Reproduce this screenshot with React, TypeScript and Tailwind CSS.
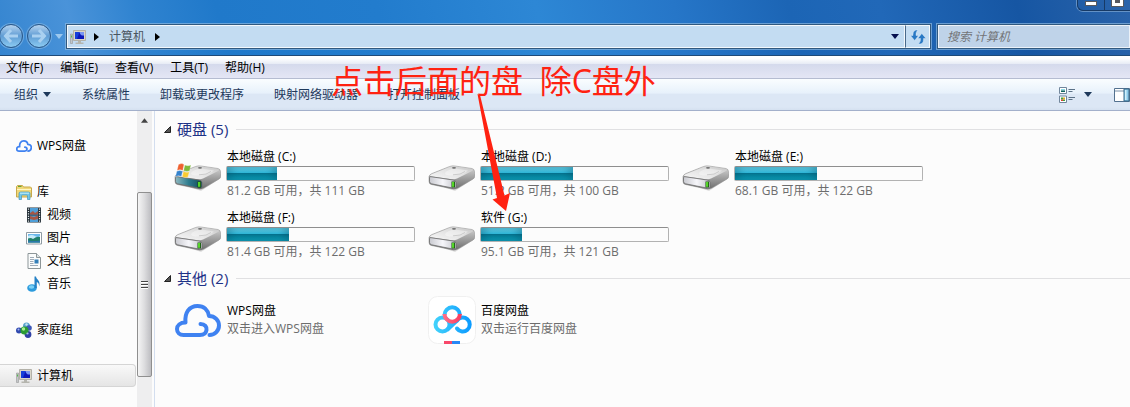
import type { ReactNode } from "react";

type Drive = {
	name: string;
	info: string;
	used: number;
	system?: boolean;
};

const menus = ["文件(F)", "编辑(E)", "查看(V)", "工具(T)", "帮助(H)"];

const commands = ["系统属性", "卸载或更改程序", "映射网络驱动器", "打开控制面板"];

const drives: Drive[] = [
	{ name: "本地磁盘 (C:)", info: "81.2 GB 可用，共 111 GB", used: 27, system: true },
	{ name: "本地磁盘 (D:)", info: "51.2 GB 可用，共 100 GB", used: 49 },
	{ name: "本地磁盘 (E:)", info: "68.1 GB 可用，共 122 GB", used: 44 },
	{ name: "本地磁盘 (F:)", info: "81.4 GB 可用，共 122 GB", used: 33 },
	{ name: "软件 (G:)", info: "95.1 GB 可用，共 121 GB", used: 22 },
];

function Caret({ className }: { className?: string }) {
	return (
		<svg viewBox="0 0 8 5" className={`h-[5px] w-2 ${className ?? ""}`} fill="currentColor" aria-hidden="true">
			<path d="M0 0h8L4 5z" />
		</svg>
	);
}

function RightCaret() {
	return (
		<svg viewBox="0 0 5 8" className="h-2 w-[5px] text-black" fill="currentColor" aria-hidden="true">
			<path d="M0 0v8l5-4z" />
		</svg>
	);
}

function ComputerIcon() {
	return (
		<svg viewBox="0 0 16 16" className="size-4 shrink-0" aria-hidden="true">
			<path d="M0.5 5h2v9.5h-2z" fill="#c3c6c8" stroke="#8a8a8a" strokeWidth=".5" />
			<path d="M1 6.5h1v2H1z" fill="#52b848" />
			<path d="M3.5 1.5h12v10h-12z" fill="#d9d6c9" stroke="#b3b1a8" />
			<path d="M5 3h9v7H5z" fill="#0b17b8" />
			<path d="M5 3h4.5L7 10H5z" fill="#173fda" />
			<path d="M9.5 3H14v3.5C12 7 10 6 9.5 3z" fill="#7996f2" />
			<path d="M8 12h3v1.5h2.5V15h-8v-1.5H8z" fill="#b5b5ae" />
		</svg>
	);
}

function CloudIcon({ className, stroke }: { className: string; stroke: number }) {
	return (
		<svg viewBox="0 0 46 33" className={className} fill="none" stroke="#3f82f1" strokeWidth={stroke} strokeLinecap="round" strokeLinejoin="round" aria-hidden="true">
			<path d="M25.5 20c4.5 0 6.500 3 6 6-.5 3.500-3 5-6.500 5H8.500C4.500 31 2 28.500 2 25c0-3.500 3-6.500 8.500-6.500C9.500 9 14 2 22.500 2c6.500 0 10.500 4 11.500 10 6 0 10 4.500 10 9.500S40 31 34.500 31" />
		</svg>
	);
}

function LibraryIcon() {
	return (
		<svg viewBox="0 0 16 16" className="size-4 shrink-0" aria-hidden="true">
			<path d="M.5 13V2.500L1.500 1.500h5l1 1.500h7l1 1V13z" fill="#f0d878" stroke="#c9a94a" />
			<path d="M2 2.500h3.500" stroke="#60a536" />
			<path d="M1 5.500h14" stroke="#fff6c4" />
			<path d="M3 15.500V9.500q0-1.500 1.500-1.500h8q1.500 0 1.500 1.500v6h-2.500V12q0-1-1-1h-4q-1 0-1 1v3.500z" fill="#73c8e8" stroke="#4496bd" strokeWidth=".7" />
			<path d="M4 9.200h9" stroke="#c4f0fb" />
		</svg>
	);
}

function VideoIcon() {
	return (
		<svg viewBox="0 0 16 16" className="size-4 shrink-0" aria-hidden="true">
			<path d="M1 .5h14v15H1z" fill="#27323a" />
			<path d="M4 1h8v6.500H4zM4 8.500h8V15H4z" fill="#4f9fd8" />
			<path d="M4 6l3-2 2 2 3-2v3.500H4zM4 9l4 1 4-1.500V12l-4 1-4-1z" fill="#a75543" />
			<path d="M2.500 1.500v14M13.500 1.500v14" stroke="#dfe6e8" strokeWidth="1.200" strokeDasharray="1.200 1.200" />
		</svg>
	);
}

function PictureIcon() {
	return (
		<svg viewBox="0 0 16 16" className="size-4 shrink-0" aria-hidden="true">
			<path d="M.5 2.500h15v11.500H.5z" fill="#fff" stroke="#8f9ba3" />
			<path d="M2 4h12v8.500H2z" fill="#6db9eb" />
			<path d="M2 6q4-2 7 0t5 0v3H2z" fill="#c8ebfa" />
			<path d="M2 8.500q3-1 5 .5 4-3 7-2v5.500H2z" fill="#21806b" />
			<path d="M2 10.500q6 1 12 0v2H2z" fill="#2b77aa" />
		</svg>
	);
}

function DocumentIcon() {
	return (
		<svg viewBox="0 0 16 16" className="size-4 shrink-0" aria-hidden="true">
			<path d="M2 .5h8.500l4 4v11H2z" fill="#fafcfc" stroke="#8d9699" />
			<path d="M10.500.5v4h4" fill="#dce3e5" stroke="#8d9699" />
			<path d="M4 4.500h4M4 6.500h4M4 8.500h3.500M4 10.500h3.500M4 12.500h8" stroke="#9fabb8" />
			<path d="M8.500 6.500h4v4h-4z" fill="#337fb8" />
		</svg>
	);
}

function MusicIcon() {
	return (
		<svg viewBox="0 0 16 16" className="size-4 shrink-0" aria-hidden="true">
			<ellipse cx="6" cy="12" rx="4.800" ry="3.800" fill="#2c9bdd" />
			<ellipse cx="5.500" cy="11" rx="2.800" ry="1.700" fill="#7bd0f5" />
			<path d="M8.500 12V.5H10C10.500 4 15 4.500 13.200 10.500 13 7.500 12 6.500 10.800 6V12z" fill="#2581c6" />
		</svg>
	);
}

function HomegroupIcon() {
	return (
		<svg viewBox="0 0 16 16" className="size-4 shrink-0" aria-hidden="true">
			<circle cx="10.500" cy="4" r="3.500" fill="#5ba3cd" />
			<circle cx="3" cy="8.500" r="3" fill="#314aaf" />
			<circle cx="13" cy="6" r="2.800" fill="#3c58b8" />
			<circle cx="12" cy="12.500" r="3.400" fill="#3041a5" />
			<circle cx="8.500" cy="8.500" r="4" fill="#2a9b33" />
			<circle cx="7.500" cy="7" r="1.700" fill="#a8ed91" />
			<circle cx="2.500" cy="7.500" r="1" fill="#a3b5ef" />
			<circle cx="11.500" cy="11.500" r="1.100" fill="#a9b8ed" />
			<circle cx="10.500" cy="2.500" r="1.200" fill="#c4e5f2" />
		</svg>
	);
}

function DriveIcon({ system }: { system?: boolean }) {
	return (
		<svg viewBox="0 0 48 32" className="h-8 w-12 shrink-0" aria-hidden="true">
			<defs>
				<linearGradient id="driveTop" x1="0" y1="1" x2="1" y2="0">
					<stop offset="0" stopColor="#f8f8f8" />
					<stop offset=".6" stopColor="#e0e0e0" />
					<stop offset="1" stopColor="#c4c4c4" />
				</linearGradient>
				<linearGradient id="driveSide" x1="0" y1="0" x2="0" y2="1">
					<stop offset="0" stopColor="#d8d8d8" />
					<stop offset="1" stopColor="#6d6d6d" />
				</linearGradient>
				<linearGradient id="driveFront" x1="0" y1="0" x2="1" y2="0">
					<stop offset="0" stopColor="#c9cad0" />
					<stop offset=".5" stopColor="#f6f6fa" />
					<stop offset="1" stopColor="#c4c5cb" />
				</linearGradient>
				<linearGradient id="driveTeal" x1="0" y1="0" x2="1" y2="0">
					<stop offset="0" stopColor="#8eb8c0" />
					<stop offset=".5" stopColor="#2d7c8e" />
					<stop offset="1" stopColor="#174a5a" />
				</linearGradient>
			</defs>
			<path d="M3 21l24 8 20-13v-4z" fill="#000" opacity=".12" />
			<path d="M1 14.500Q1.500 12.500 4 11.500L21.500 4.500Q24 3.500 27 4L44 6.500Q46.500 7.200 46.500 9.500V14.500Q46.500 16 45 17L30 26Q27.500 27.500 24.500 27L3.500 22.500Q1 22 1 19.500z" fill="url(#driveSide)" stroke="#8a8a8a" strokeWidth=".5" />
			<path d="M2 13.500Q2.500 12.500 4 12L22 5Q24 4.200 27 4.500L44 7Q46 7.800 44 9L29 16.500Q27 17.500 24 17.200L4 14.500Q2 14.300 2 13.500z" fill="url(#driveTop)" />
			<path d="M17 11Q20 7 27 6.500L40 8.500Q35 13 26 13.500 17 14 17 11z" fill="#fff" opacity=".38" />
			<path d="M25 12.800Q33 13 37 9.500" fill="none" stroke="#bbb" strokeWidth=".7" />
			<ellipse cx="26" cy="5.800" rx="2" ry=".9" fill="#707070" />
			<path d="M1.500 15.500Q1.500 14.500 3 14.700L25 18Q28 18.500 28 20.500V25Q28 26.500 25.500 26.200L3.500 21.800Q1.500 21.300 1.500 19.500z" fill={system ? "url(#driveTeal)" : "url(#driveFront)"} stroke="#6d6d6d" strokeWidth=".8" />
			<path d="M23.500 19.500h3.500v6h-3.500z" fill="#174c13" />
			<path d="M24 20h2.200v4.800H24z" fill="#55d529" />
			{system && (
				<g stroke="#fff" strokeWidth=".3">
					<path d="M4.500 2.500Q8 .5 10 2.500L8.800 8.500Q6 6.800 3 8.500z" fill="#ef6130" />
					<path d="M10.800 3Q14 4.500 17 3L15.500 9Q13 10 9.600 8.700z" fill="#7fb93b" />
					<path d="M2.800 9.200Q6 7.600 8.600 9.300L7.400 14.500Q4 13 1.500 14.800z" fill="#3583cd" />
					<path d="M9.400 9.500Q12.500 11 15.300 9.700L14 15Q11 16.300 8.200 14.800z" fill="#f9cb32" />
				</g>
			)}
		</svg>
	);
}

function BaiduIcon() {
	return (
		<svg viewBox="0 0 48 48" className="size-12 shrink-0" fill="none" aria-hidden="true">
			<defs>
				<linearGradient id="baiduBlue" x1="6" y1="0" x2="42" y2="0" gradientUnits="userSpaceOnUse">
					<stop offset="0" stopColor="#43d2fb" />
					<stop offset="1" stopColor="#0d9cff" />
				</linearGradient>
				<linearGradient id="baiduRed" x1="16" y1="0" x2="33" y2="0" gradientUnits="userSpaceOnUse">
					<stop offset="0" stopColor="#ff6d86" />
					<stop offset="1" stopColor="#f93d60" />
				</linearGradient>
			</defs>
			<rect x=".5" y=".5" width="47" height="47" rx="9" fill="#fff" stroke="#f0f0f0" />
			<g stroke="url(#baiduBlue)" strokeWidth="4">
				<path d="M16.500 19a7.700 7.700 0 0 1 15.400 0" />
				<circle cx="14.500" cy="28.500" r="7" />
				<path d="M19 34L29.500 24" />
				<path d="M29 32.500a7 7 0 1 0 0-8" strokeLinecap="round" />
			</g>
			<path d="M16.500 18a7.700 7.700 0 0 0 15.400 0" stroke="url(#baiduRed)" strokeWidth="4" />
			<path d="M16 45h8v3h-8z" fill="#f8486a" />
			<path d="M24 45h8v3h-8z" fill="#2787f5" />
		</svg>
	);
}

function NavButton({ label, flip }: { label: string; flip?: boolean }) {
	return (
		<button type="button" aria-label={label} className="flex size-6 items-center justify-center rounded-full border border-[#2c5786] bg-linear-to-b from-[#b5d3ef] via-[#5f9cd4] to-[#8ccbf2] ring-1 ring-[#8fc0ea]/60">
			<svg viewBox="0 0 18 18" className={flip ? "size-[18px] -scale-x-100" : "size-[18px]"} fill="none" stroke="#a9d0f0" strokeWidth="3" aria-hidden="true">
				<path d="M9 3L3.500 9 9 15M4 9h12" />
			</svg>
		</button>
	);
}

function TitleBar() {
	return (
		<header className="relative flex h-14 items-end border-b border-[#1f4a78] bg-[linear-gradient(75deg,#3585d0_0%,#4a93d9_7%,#2f83d0_13%,#2079ca_20%,#227ccd_34%,#2d87d5_48%,#2676c8_60%,#1c65b5_70%,#2168b8_78%,#1656a3_90%,#2a63aa_100%)] pb-[6px]">
			<div className="-ml-px flex h-[26px] items-center gap-1">
				<NavButton label="后退" />
				<NavButton label="前进" flip />
				<button type="button" aria-label="最近浏览的位置" className="pr-[3px] text-[#9cc8ee]">
					<Caret />
				</button>
			</div>
			<div className="flex h-[25px] flex-1 items-stretch border border-[#31597f] bg-[#c3dcf2] ring-1 ring-[#8bb8df]/70">
				<div className="flex flex-1 items-center border border-white/80 pl-[2px] text-[#4a5560]">
					<ComputerIcon />
					<span className="w-2" />
					<RightCaret />
					<a href="#computer" className="mx-[10px]">
						计算机
					</a>
					<RightCaret />
					<button type="button" aria-label="上一个位置" className="ml-auto px-[5px] text-[#07104f]">
						<Caret />
					</button>
				</div>
				<button type="button" aria-label="刷新" className="flex w-[25px] items-center justify-center border border-white/80 border-l-[#49698a]">
					<svg viewBox="0 0 16 16" className="size-4" fill="#2878c4" stroke="#eef6fd" strokeWidth=".4" aria-hidden="true">
						<path d="M8 1Q3 .5 3 5.500V6.500H.5L4.700 11.500 8.500 6.500H6Q5.500 3 8 1z" />
						<path d="M8.500 15q5 .5 5-4.500V9.500H16L11.800 4.500 7.800 9.500h2.700q.5 3-2 5.500z" />
					</svg>
				</button>
			</div>
			<input
				type="text"
				aria-label="搜索 计算机"
				placeholder="搜索 计算机"
				className="ml-[6px] h-[25px] w-[193px] border border-r-0 border-[#31597f] bg-[#bfd3e9] pl-[9px] italic ring-1 ring-[#8bb8df]/70 outline-none inset-shadow-[0_0_0_1px_#ffffffb0] placeholder:text-[#737578]"
			/>
			{/* window controls hang over the top edge */}
			<div className="absolute top-0 right-0 flex h-[11px] w-[53px] rounded-bl-md border-b border-l border-[#173a66] ring-1 ring-[#7fa6d2]/70">
				<button type="button" aria-label="最小化" className="flex flex-1 justify-center border-r border-[#173a66]">
					<span className="mt-px h-[5px] w-3 border border-[#56585f] bg-white" />
				</button>
				<button type="button" aria-label="最大化" className="flex flex-1 justify-center">
					<span className="h-[6px] w-[11px] border-3 border-t-0 border-white bg-[#56585f] ring-1 ring-[#56585f]" />
				</button>
			</div>
		</header>
	);
}

function MenuBar() {
	return (
		<nav className="flex h-[23px] items-center gap-[17px] border-b border-[#b5bcd1] bg-[linear-gradient(#ffffff_0%,#ffffff_10%,#e9edf6_34%,#d5daec_38%,#e4e6f5_100%)] pt-px pl-[6px] text-black">
			{menus.map((menu) => (
				<button key={menu} type="button">
					{menu}
				</button>
			))}
		</nav>
	);
}

function Toolbar() {
	return (
		<div className="flex h-8 items-center border-b border-[#a3b0cb] bg-[linear-gradient(#fafdff_0%,#e7f1fb_46%,#dce7f5_48%,#dce7f5_90%,#d5e1f0_100%)] pl-[14px] text-[#1e395b]">
			<button type="button" className="mr-[31px] flex items-center gap-[5px]">
				组织
				<Caret />
			</button>
			<div className="flex gap-[30px]">
				{commands.map((command) => (
					<button key={command} type="button">
						{command}
					</button>
				))}
			</div>
			<button type="button" aria-label="更改您的视图" className="ml-auto flex items-center gap-[9px]">
				<svg viewBox="0 0 16 16" className="size-4" aria-hidden="true">
					<path d="M.5.5h7v6h-7zM.5 9h7v6.500h-7z" fill="#fff" stroke="#71869c" />
					<path d="M2 2h4v1.500H2z" fill="#8bd9e5" />
					<path d="M2 3.500h4V5H2z" fill="#12625e" />
					<path d="M2 10.500h2v2H2zM4 12.500h2v1.500H4z" fill="#3ba53d" />
					<path d="M4 10.500h2v2H4z" fill="#e9a526" />
					<path d="M2 12.500h2v1.500H2z" fill="#d64034" />
					<path d="M9.500 2.500h6.500M9.500 4.500h4M9.500 10.500h6.500M9.500 12.500h4" stroke="#5b7187" />
				</svg>
				<Caret />
			</button>
			<button type="button" aria-label="显示预览窗格" className="ml-[22px]">
				<svg viewBox="0 0 16 14" className="h-[14px] w-4" aria-hidden="true">
					<path d="M.5.5h15v13H.5z" fill="#fff" stroke="#53718f" />
					<path d="M1 3h9" stroke="#7890a8" />
					<path d="M10 1h5v12h-5z" fill="#8dcaea" stroke="#386888" />
					<path d="M11 2h1.500v10H11z" fill="#cfeffb" />
				</svg>
			</button>
		</div>
	);
}

function SideItem({ icon, label, nested }: { icon: ReactNode; label: string; nested?: boolean }) {
	return (
		<li>
			<a href="#item" className={`flex h-[23px] items-center gap-[5px] ${nested ? "pl-[26px]" : "pl-4"}`}>
				{icon}
				{label}
			</a>
		</li>
	);
}

function Sidebar() {
	return (
		<aside className="flex shrink-0 border-r border-[#d3deef] pr-[2px] text-black">
			<ul className="w-[137px] pt-[23px]">
				<SideItem icon={<CloudIcon className="h-3 w-4 shrink-0" stroke={5} />} label="WPS网盘" />
				<li className="h-[23px]" />
				<SideItem icon={<LibraryIcon />} label="库" />
				<SideItem icon={<VideoIcon />} label="视频" nested />
				<SideItem icon={<PictureIcon />} label="图片" nested />
				<SideItem icon={<DocumentIcon />} label="文档" nested />
				<SideItem icon={<MusicIcon />} label="音乐" nested />
				<li className="h-[23px]" />
				<SideItem icon={<HomegroupIcon />} label="家庭组" />
				<li className="h-[23px]" />
				<li className="mr-px">
					<a href="#computer" aria-current="page" className="flex h-[23px] items-center gap-[5px] rounded-r-sm border border-l-0 border-[#d5d5d5] bg-linear-to-b from-[#f9f9f9] to-[#e5e5e5] pl-4">
						<ComputerIcon />
						计算机
					</a>
				</li>
			</ul>
			<div className="flex w-[15px] flex-col bg-[#eeeeef]">
				<button type="button" aria-label="向上滚动" className="flex h-[18px] items-center justify-center text-[#444]">
					<Caret className="h-1 w-[7px] rotate-180" />
				</button>
				<div className="mt-[63px] flex h-[185px] flex-col items-center justify-center gap-px rounded-xs border border-[#8f8f8f] bg-linear-to-r from-[#f5f5f5] via-[#dcdcde] to-[#bdbdc1]">
					<span className="h-[2px] w-[7px] border-t border-[#444] bg-white" />
					<span className="h-[2px] w-[7px] border-t border-[#444] bg-white" />
					<span className="h-[2px] w-[7px] border-t border-[#444] bg-white" />
				</div>
			</div>
		</aside>
	);
}

function Group({ title, children }: { title: string; children: ReactNode }) {
	return (
		<section>
			<h2 className="flex h-5 items-center text-[15px] text-[#1e3287]">
				<svg viewBox="0 0 7 7" className="mr-[6px] size-[7px]" aria-hidden="true">
					<path d="M6.500.5v6h-6z" fill="#555" stroke="#222" />
				</svg>
				{title}
				<span className="ml-2 h-px flex-1 bg-[#e0e0e2]" />
			</h2>
			<div className="flex flex-wrap pl-[10px]">{children}</div>
		</section>
	);
}

function DriveTile({ drive }: { drive: Drive }) {
	return (
		<button type="button" className="flex h-[61px] w-[254px] items-start gap-1 pt-[9px] text-left">
			<span className="pt-[14px]">
				<DriveIcon system={drive.system} />
			</span>
			<span className="block w-[189px]">
				<span className="block h-[18px] pl-px leading-[18px] text-black">{drive.name}</span>
				<span className="block h-[15px] rounded-xs border border-[#b2b2b2] border-t-[#8e8e8e] bg-[#fcfcfc]">
					<span
						className="block h-full bg-[linear-gradient(#74dcf3_0%,#2fb9dc_46%,#067590_50%,#0893ad_78%,#12a9c4_100%)] inset-shadow-[5px_0_7px_#06506955,-5px_0_7px_#06506955]"
						style={{ width: `${drive.used}%` }}
					/>
				</span>
				<span className="block pl-px leading-5 text-[#6d6d6d]">{drive.info}</span>
			</span>
		</button>
	);
}

function AppTile({ icon, name, info }: { icon: ReactNode; name: string; info: string }) {
	return (
		<button type="button" className="flex w-[254px] items-center gap-[5px] pt-2 text-left">
			<span className="flex size-12 items-center justify-center">{icon}</span>
			<span className="leading-[18px]">
				<span className="block text-black">{name}</span>
				<span className="block text-[#6d6d6d]">{info}</span>
			</span>
		</button>
	);
}

function Annotation() {
	return (
		<div className="pointer-events-none absolute top-[61px] left-[331px] text-[#ff2211]">
			<p className="text-[32px] leading-10 whitespace-pre">点击后面的盘{"  "}除C盘外</p>
			<svg viewBox="0 0 40 118" className="absolute top-[33px] left-[145px] h-[118px] w-10" fill="currentColor" aria-hidden="true">
				<path d="M1.500 0L4 1 28.500 101.500 34 99 30 117 16.500 105.500 21 104z" />
			</svg>
		</div>
	);
}

export default function App() {
	return (
		<div lang="zh-CN" className="relative flex min-h-screen flex-col overflow-hidden bg-[#fcfcfc] font-['Open_Sans','Noto_Sans_CJK_SC',sans-serif] text-xs">
			<TitleBar />
			<MenuBar />
			<Toolbar />
			<div className="flex flex-1">
				<Sidebar />
				<main className="flex flex-1 flex-col gap-[7px] pt-2 pl-[9px]">
					<Group title="硬盘 (5)">
						{drives.map((drive) => (
							<DriveTile key={drive.name} drive={drive} />
						))}
					</Group>
					<Group title="其他 (2)">
						<AppTile icon={<CloudIcon className="h-[33px] w-[46px]" stroke={4} />} name="WPS网盘" info="双击进入WPS网盘" />
						<AppTile icon={<BaiduIcon />} name="百度网盘" info="双击运行百度网盘" />
					</Group>
				</main>
			</div>
			<Annotation />
		</div>
	);
}
